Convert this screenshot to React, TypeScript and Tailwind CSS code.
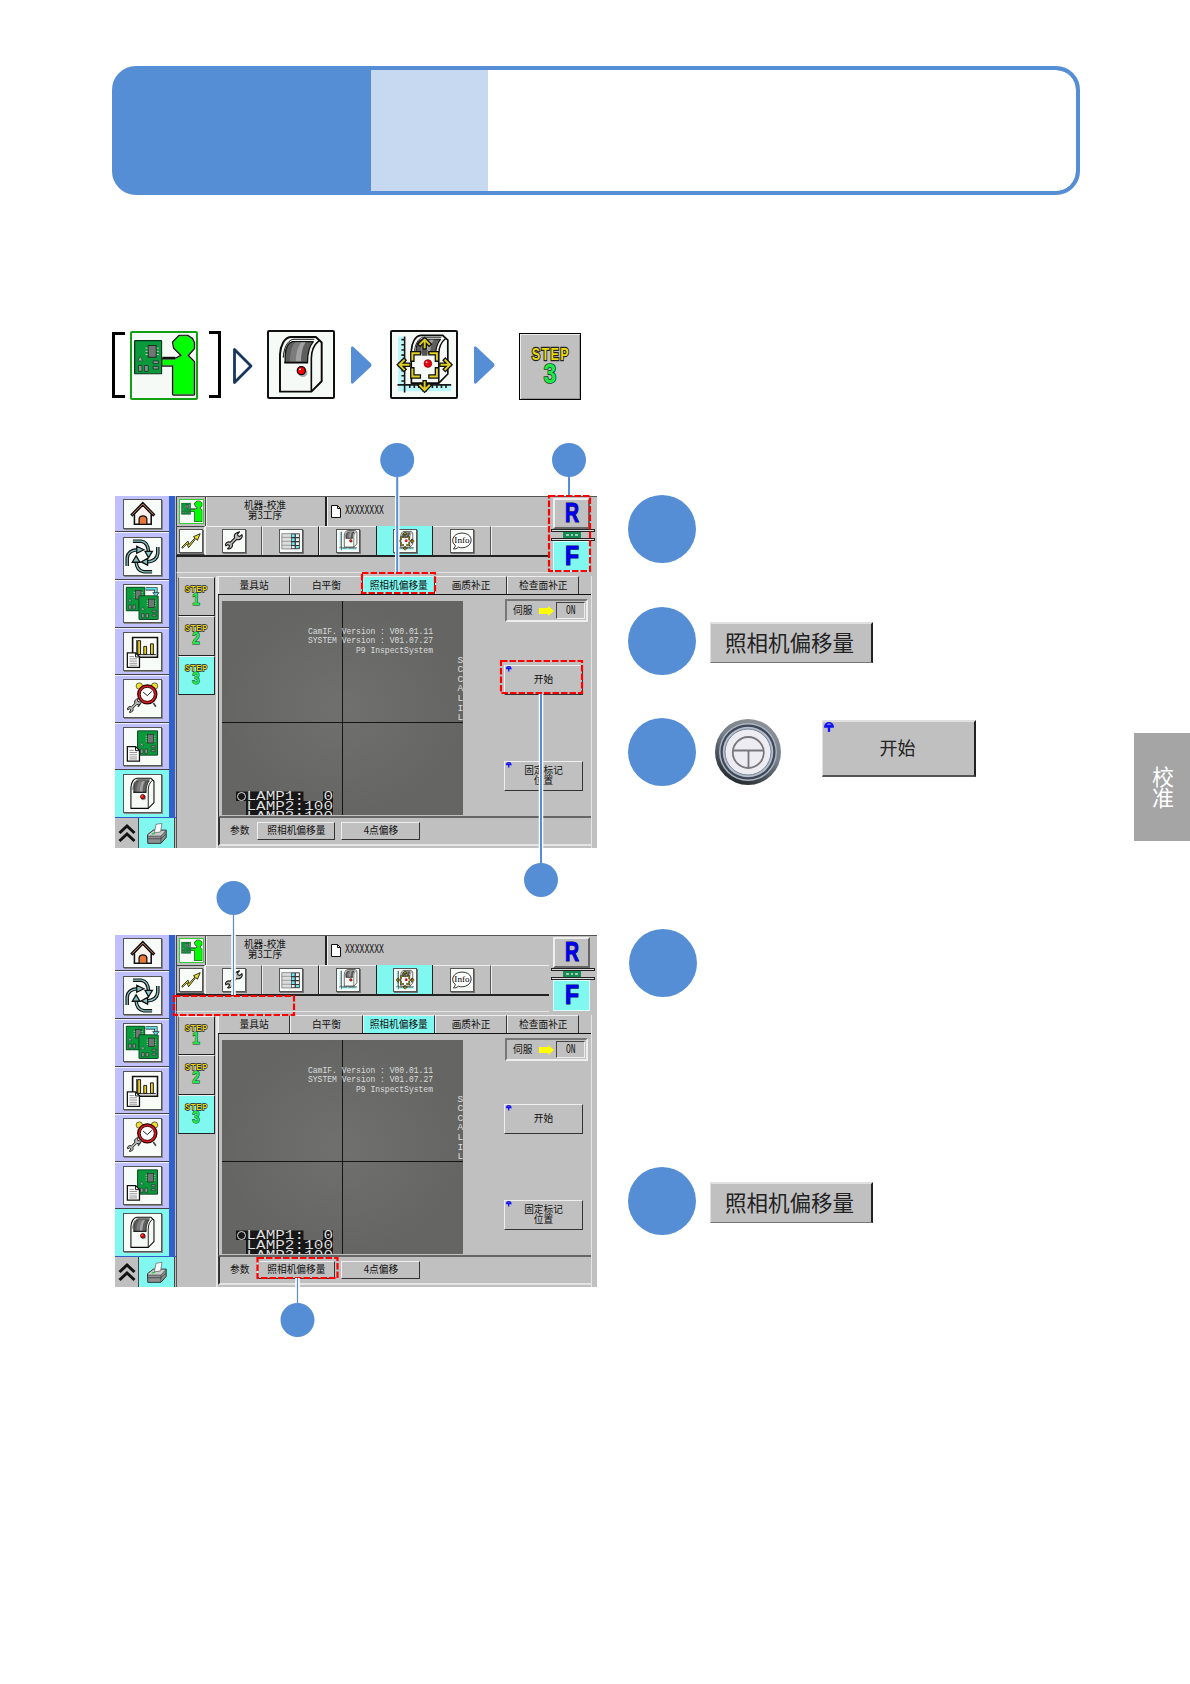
import type { ReactNode } from "react";

type StepNo = 1 | 2 | 3;

// ---------- shared drawings ----------

function Board({ x, y, w, h }: { x: number; y: number; w: number; h: number }) {
  return (
    <svg x={x} y={y} width={w} height={h} viewBox="0 0 64 76" preserveAspectRatio="none">
      <rect x="1.5" y="1.5" width="61" height="73" rx="2" fill="#0a9a3c" stroke="#08331a" strokeWidth="3" />
      <path d="M26 18h30M26 25h30M26 32h30" stroke="#c4dccb" strokeWidth="2" />
      <rect x="32" y="12" width="18" height="26" fill="#6f7772" stroke="#222" strokeWidth="2" />
      <path d="M8 46l6-10 6 10z" fill="#8fb09b" stroke="#143" strokeWidth="1.5" />
      <path d="M10 56h8v13h-8zM24 56h8v13h-8z" fill="#8d9490" stroke="#1b3a28" strokeWidth="2" />
      <path d="M43 46h12v6H43zM43 58h12v6H43z" fill="#8d9490" stroke="#1b3a28" strokeWidth="2" />
    </svg>
  );
}

function PaperShape({ x, y }: { x: number; y: number }) {
  return (
    <g transform={`translate(${x} ${y})`}>
      <path d="M1.5 1.5h26l12 12v33h-38z" fill="#fff" stroke="#111" strokeWidth="4" />
      <path d="M27 2v12h12" fill="none" stroke="#111" strokeWidth="3" />
      <path d="M8 13h14M8 20h24M8 27h24M8 34h24M8 40h24" stroke="#777" strokeWidth="2.5" />
    </g>
  );
}

function WrenchShape({ transform }: { transform?: string }) {
  return (
    <g transform={transform}>
      <path
        d="M44 10c-7 3-9 10-6 16L24 40c-7-3-14 1-16 8l2 4 6-4 5 3-1 6-5 4c7 3 15-2 16-10 0-3 0-4-1-5l15-15c8 3 16-1 18-10l-1-6-7 6-6-2-1-6 6-7z"
        fill="#b8b8b8"
        stroke="#111"
        strokeWidth="3.5"
        strokeLinejoin="round"
      />
    </g>
  );
}

function MachineShape() {
  return (
    <g strokeLinejoin="round">
      <path d="M37 187V72C38 45 50 20 70 18h78l18 17v120l-32 32z" fill="#f6faf6" stroke="#0a0a0a" strokeWidth="6" />
      <path d="M134 187V84c0-24 8-42 24-55" fill="none" stroke="#0a0a0a" strokeWidth="5" />
      <path d="M47 82c2-30 12-52 30-57h66" fill="none" stroke="#0a0a0a" strokeWidth="3" />
      <path d="M53 97V75c1-23 9-40 23-43h64c-12 14-18 34-18 65z" fill="#5e5e5e" stroke="#111" strokeWidth="4" />
      <path d="M68 94c0-26 5-46 16-60h16c-10 16-14 36-14 60z" fill="#7c7c7c" />
      <path d="M86 94c0-26 5-46 16-60h14c-10 16-14 36-14 60z" fill="#a2a2a2" />
      <path d="M50 97h74" stroke="#0a0a0a" strokeWidth="5" />
      <circle cx="108" cy="128" r="14" fill="#aaa" />
      <circle cx="103" cy="122" r="12.5" fill="#f00" stroke="#0a0a0a" strokeWidth="4" />
      <circle cx="99" cy="118" r="3" fill="#fff" />
    </g>
  );
}

function Axes() {
  return (
    <>
      <path d="M22 16h16v148h148v22H22z" fill="#b9f7fb" />
      <path d="M42 16v174M20 166h166" stroke="#1a1a1a" strokeWidth="5" />
      <path
        d="M32 26h10M32 42h10M32 58h10M32 74h10M32 90h10M32 106h10M32 122h10M32 138h10M32 154h10M58 166v10M72 166v10M86 166v10M114 166v10M128 166v10M142 166v10M156 166v10M170 166v10"
        stroke="#1a1a1a"
        strokeWidth="5"
      />
    </>
  );
}

function OffsetShape() {
  return (
    <>
      <Axes />
      <svg x="40" y="4" width="156" height="166" viewBox="20 8 160 190">
        <MachineShape />
      </svg>
      <rect x="66" y="70" width="78" height="72" fill="#f6faf6" />
      <rect x="95" y="58" width="18" height="18" fill="#555" />
      <g fill="none" strokeLinecap="square">
        {["#111", "#e0cf20"].map((color, i) => (
          <g key={color} stroke={color} strokeWidth={i ? 6 : 14}>
            <path d="M66 88V68h20M122 68h20v20M66 118v22h20M122 140h20v-22" />
            <path d="M104 50V28M90 40l14-14 14 14M104 158v22M90 168l14 14 14-14M54 104H28M40 90l-14 14 14 14M156 104h24M168 90l14 14-14 14" />
          </g>
        ))}
      </g>
      <circle cx="114" cy="100" r="12" fill="#e60012" stroke="#700" strokeWidth="2" />
      <circle cx="110" cy="96" r="3" fill="#fbb" />
    </>
  );
}

function PersonShape() {
  return (
    <>
      <path d="M97 76h40v10H97z" fill="#111" />
      <path
        d="M150 12h24l14 9 6 12v17l-20 22 20 20v100h-63V102H97V85h37l24-13-24-24-3-17z"
        fill="none"
        stroke="#111"
        strokeWidth="9"
        strokeLinejoin="round"
      />
      <path
        d="M150 12h24l14 9 6 12v17l-20 22 20 20v100h-63V102H97V85h37l24-13-24-24-3-17z"
        fill="#0f0"
        stroke="#7d9a7d"
        strokeWidth="2"
      />
      <Board x={9} y={24} w={88} h={107} />
    </>
  );
}

// ---------- icon boxes ----------

function BigIcon({ className, children }: { className: string; children: ReactNode }) {
  return (
    <svg viewBox="3 3 198 200" className={`h-[69px] w-[68px] rounded-xs border-2 bg-[#f6faf6] ${className}`}>
      {children}
    </svg>
  );
}

function SideIcon({ children, short }: { children: ReactNode; short?: boolean }) {
  return (
    <svg
      viewBox={short ? "0 0 116 90" : "0 0 116 116"}
      className={`w-[39px] border border-[#555] bg-[#f8fcf8] shadow-[1px_1px_0_#888] ${short ? "h-[30px]" : "h-[39px]"}`}
    >
      {children}
    </svg>
  );
}

function ToolIcon({ children }: { children: ReactNode }) {
  return (
    <svg viewBox="0 0 72 72" className="size-6 border border-[#555] bg-[#f8fcf8] shadow-[1px_1px_0_#777]">
      {children}
    </svg>
  );
}

function StepLabel({ n, className }: { n: StepNo; className: string }) {
  return (
    <svg viewBox="0 0 70 72" className={className}>
      <g fontFamily="Liberation Sans, sans-serif" fontWeight="bold" paintOrder="stroke">
        <text transform="scale(.76 1)" x="4" y="25" fontSize="29" fill="#e8d80c" stroke="#222" strokeWidth="4" textLength="85">
          STEP
        </text>
        <text x="24" y="65" fontSize="47" fill="#1fe84a" stroke="#0b4a1c" strokeWidth="3" textLength="22" lengthAdjust="spacingAndGlyphs">
          {n}
        </text>
      </g>
    </svg>
  );
}

function HandleMark({ className }: { className: string }) {
  return (
    <svg viewBox="0 0 10 10" className={className}>
      <circle cx="5" cy="5" r="5" fill="#1212f0" />
      <path d="M0 5.8h3.800V10H0zM10 5.800H6.200V10H10z" fill="#c0c0c8" />
      <path d="M2.6 2.800a3.400 3.400 0 0 1 4.800 0z" fill="#a0a0f4" />
    </svg>
  );
}

// ---------- breadcrumb ----------

function NextArrow({ className }: { className: string }) {
  return (
    <svg viewBox="0 0 21 38" className={`h-[38px] w-[21px] ${className}`}>
      <path d="M0 1.5Q0 0 2 0.5L20 17.5Q21 19 20 20.5L2 37.5Q0 38 0 36.5z" fill="#558ed5" />
    </svg>
  );
}

function Breadcrumb() {
  return (
    <nav className="mt-[135px] ml-[112px] flex h-[70px] items-start">
      <span className="mt-[2px] h-[66px] w-[13px] border-y-3 border-l-3 border-black" />
      <BigIcon className="mt-[1px] ml-[5px] border-[#12a012]">
        <PersonShape />
      </BigIcon>
      <span className="mt-[1px] ml-[11px] h-[67px] w-3 border-y-3 border-r-3 border-black" />
      <svg viewBox="0 0 20 38" className="mt-[17px] ml-3 h-[38px] w-5">
        <path d="M1.5 2.5v33L18 19z" fill="#fff" stroke="#17365d" strokeWidth="2.8" strokeLinejoin="round" />
      </svg>
      <BigIcon className="ml-[14px] border-[#111]">
        <MachineShape />
      </BigIcon>
      <NextArrow className="mt-4 ml-4" />
      <BigIcon className="ml-[18px] border-[#111]">
        <OffsetShape />
      </BigIcon>
      <NextArrow className="mt-4 ml-4" />
      <div className="mt-[3px] ml-6 flex h-[67px] w-[62px] items-center justify-center border border-black bg-[#c0c0c0] shadow-[inset_1px_1px_0_#eee,inset_-1px_-1px_0_#999]">
        <StepLabel n={3} className="h-[41px] w-[40px]" />
      </div>
    </nav>
  );
}

// ---------- machine screen ----------

function HomeIcon() {
  return (
    <SideIcon short>
      <path d="M32 44v34h54V44L59 16z" fill="#fdf3ec" stroke="#111" strokeWidth="5" />
      <path d="M22 50l37-38 37 38" fill="none" stroke="#111" strokeWidth="10" />
      <path d="M25 47l34-34 34 34" fill="none" stroke="#e08a60" strokeWidth="3" />
      <path d="M47 78V60c3-12 22-12 25 0v18z" fill="#e87838" stroke="#111" strokeWidth="4" />
    </SideIcon>
  );
}

function CycleIcon() {
  return (
    <SideIcon>
      {["#111", "#86c4c6"].map((color, i) => (
        <g key={color} fill="none" stroke={color} strokeWidth={i ? 4 : 11}>
          <path d="M28 10h26c16 2 22 14 23 34" />
          <path d="M106 28v20c-2 18-14 26-34 27" />
          <path d="M88 106H62c-17-3-23-14-24-32" />
          <path d="M10 88V62c2-17 14-24 32-25" />
        </g>
      ))}
      <path d="M66 42l11 20 12-20zM74 64L54 75l20 10zM26 76l12-20 12 20zM40 26l22 11-22 11z" fill="#86c4c6" stroke="#111" strokeWidth="4" />
    </SideIcon>
  );
}

function BoardsIcon() {
  return (
    <SideIcon>
      <Board x={5} y={5} w={62} h={78} />
      <Board x={45} y={32} w={64} h={78} />
      <path d="M68 12h32v14" fill="none" stroke="#111" strokeWidth="10" />
      <path d="M68 12h32v14" fill="none" stroke="#5fe0e8" strokeWidth="6" />
      <path d="M90 24h20l-10 12z" fill="#5fe0e8" stroke="#111" strokeWidth="2" />
    </SideIcon>
  );
}

function ChartIcon() {
  return (
    <SideIcon>
      <path d="M27 14h78v62H27z" fill="#fff" stroke="#111" strokeWidth="5" />
      <path d="M40 22v46h60" fill="none" stroke="#111" strokeWidth="3" />
      <path d="M43 24h9v43h-9zM62 42h9v25h-9zM83 34h9v33h-9z" fill="#e8d020" stroke="#111" strokeWidth="3" />
      <PaperShape x={9} y={61} />
    </SideIcon>
  );
}

function ClockIcon() {
  return (
    <SideIcon>
      <path d="M52 72l-8 12M92 72l8 12" stroke="#444" strokeWidth="5" />
      <circle cx="48" cy="19" r="10" fill="#f0e030" stroke="#222" strokeWidth="2" />
      <circle cx="96" cy="19" r="10" fill="#f0e030" stroke="#222" strokeWidth="2" />
      <circle cx="73" cy="45" r="30" fill="#d81c1c" stroke="#300" strokeWidth="4" />
      <circle cx="73" cy="45" r="22" fill="#fff" stroke="#300" strokeWidth="3" />
      <path d="M60 38l13 11 14-13" fill="none" stroke="#111" strokeWidth="3" />
      <WrenchShape transform="translate(4 52) scale(.8)" />
    </SideIcon>
  );
}

function BoardDocIcon() {
  return (
    <SideIcon>
      <Board x={41} y={7} w={66} h={80} />
      <PaperShape x={9} y={57} />
    </SideIcon>
  );
}

function MachineIcon() {
  return (
    <SideIcon>
      <g transform="translate(1 0) scale(.56)">
        <MachineShape />
      </g>
    </SideIcon>
  );
}

const sideItems = [CycleIcon, BoardsIcon, ChartIcon, ClockIcon, BoardDocIcon];

function Sidebar() {
  return (
    <aside className="w-[61px] shrink-0">
      <div className="flex h-[322px] border-b border-[#2f5fc8]">
        <div className="flex w-[54px] flex-col">
          <div className="flex h-[36.5px] items-center justify-center border-b border-[#444] bg-[#c0c0ff]">
            <HomeIcon />
          </div>
          {sideItems.map((Icon, i) => (
            <div
              key={i}
              className="flex h-[47.6px] items-center justify-center border-t border-b border-t-[#eef] border-b-[#444] bg-[#c0c0ff]"
            >
              <Icon />
            </div>
          ))}
          <div className="flex h-[47px] items-center justify-center bg-[#80f8f0]">
            <MachineIcon />
          </div>
        </div>
        <div className="w-[6px] bg-[#2f60cc]" />
      </div>
      <div className="flex h-[30px]">
        <div className="flex w-6 items-center justify-center border-r border-[#444] bg-[#c0c0c0]">
          <svg viewBox="0 0 18 20" className="h-5 w-[18px]">
            <path d="M1.5 10L9 3l7.500 7M1.500 18L9 11l7.500 7" fill="none" stroke="#111" strokeWidth="3" />
          </svg>
        </div>
        <div className="flex w-9 items-center justify-center border-r border-[#444] bg-[#80f8f0]">
          <svg viewBox="0 0 60 64" className="h-[21px] w-5">
            <path d="M1 36l18-14h39v22L42 62H2z" fill="#8c9090" stroke="#333" strokeWidth="3" />
            <path d="M1 36l18-14h39L42 40H2z" fill="#c8cccc" stroke="#333" strokeWidth="2" />
            <path d="M22 30L27 4l18-3-4 26z" fill="#fff" stroke="#555" strokeWidth="2" />
            <path d="M42 40v21M2 48h40l15-14" fill="none" stroke="#333" strokeWidth="2" />
            <path d="M14 34l10-3" stroke="#2c4" strokeWidth="4" />
          </svg>
        </div>
      </div>
    </aside>
  );
}

function ToolBar() {
  return (
    <div className="flex h-[31px] border-b-2 border-[#222]">
      <div className="flex w-[29px] items-center justify-center border border-[#444] border-r-[#eee]">
        <ToolIcon>
          <path d="M6 56l20-20 3 12 20-22-5-4 22-10-9 22-5-6-24 30-5-13L8 60z" fill="#f0e020" stroke="#222" strokeWidth="3" />
        </ToolIcon>
      </div>
      <div className="flex w-[57px] items-center justify-center border-t border-l border-r border-t-[#eee] border-l-[#eee] border-r-[#555]">
        <ToolIcon>
          <WrenchShape />
        </ToolIcon>
      </div>
      <div className="flex w-[57px] items-center justify-center border-t border-l border-r border-t-[#eee] border-l-[#eee] border-r-[#222]">
        <ToolIcon>
          <path d="M6 12h58v50H6z" fill="#ddd" stroke="#555" strokeWidth="2" />
          <path d="M36 12h28v50H36z" fill="#333" />
          <path d="M38 14h10v9H38zM38 27h10v9H38zM38 40h10v9H38zM52 52h10v8H52z" fill="#6fe4ec" />
          <path d="M52 14h10v9H52zM52 27h10v9H52zM52 40h10v9H52zM38 52h10v8H38z" fill="#eee" />
          <path d="M6 24h30M6 37h30M6 50h30" stroke="#777" strokeWidth="2" />
        </ToolIcon>
      </div>
      <div className="flex w-[57px] items-center justify-center border-t border-l border-t-[#eee] border-l-[#eee]">
        <ToolIcon>
          <g transform="scale(.35)">
            <Axes />
          </g>
          <g transform="translate(12 -4) scale(.32)">
            <MachineShape />
          </g>
        </ToolIcon>
      </div>
      <div className="flex w-[57px] items-center justify-center border-x border-[#222] bg-[#80f8f0]">
        <ToolIcon>
          <g transform="scale(.35)">
            <OffsetShape />
          </g>
        </ToolIcon>
      </div>
      <div className="flex w-[58px] items-center justify-center border-t border-r border-t-[#eee] border-r-[#555]">
        <ToolIcon>
          <path d="M14 50C-2 40 4 10 36 10s38 28 20 42c-10 7-24 8-32 4-6 6-10 6-16 6 4-4 6-8 6-12z" fill="#fff" stroke="#222" strokeWidth="3" />
          <text
            x="11"
            y="43"
            fontSize="29"
            fontFamily="Liberation Serif, serif"
            textLength="50"
            lengthAdjust="spacingAndGlyphs"
            fill="#000"
          >
            Info
          </text>
        </ToolIcon>
      </div>
      <div className="flex-1 border-t border-l border-[#eee]" />
    </div>
  );
}

function TrackLetter({ letter }: { letter: string }) {
  return (
    <svg viewBox="0 0 20 26" className="h-[26px] w-5 -translate-y-px">
      <text
        x="3"
        y="21.800"
        fontFamily="Liberation Sans, sans-serif"
        fontWeight="bold"
        fontSize="27"
        fill="#0000f0"
        stroke="#101060"
        strokeWidth="1.2"
        paintOrder="stroke"
        textLength="14"
        lengthAdjust="spacingAndGlyphs"
      >
        {letter}
      </text>
    </svg>
  );
}

function TrackSwitch() {
  return (
    <div className="flex h-[77px] w-[47px] flex-col border-t border-[#555] pt-[1px] pl-1">
      <div className="flex h-[31px] w-[37px] items-center justify-center border-2 border-t-[#eee] border-r-[#666] border-b-[#666] border-l-[#eee]">
        <TrackLetter letter="R" />
      </div>
      <div className="-ml-[2px] flex h-3 w-11 flex-col justify-between">
        <div className="h-[3px] border border-[#222] bg-[#ddd]" />
        <svg viewBox="0 0 18 6" className="ml-3 h-[6px] w-[18px]">
          <path d="M0 0h18v6H0z" fill="#168a50" />
          <path d="M3 2h3v2H3zM8 2h2v2H8zM12 2h3v2h-3z" fill="#9cb" />
        </svg>
        <div className="h-[3px] border border-[#222] bg-[#ddd]" />
      </div>
      <div className="flex h-[31px] w-[37px] items-center justify-center border border-[#dff] bg-[#80f8f0]">
        <TrackLetter letter="F" />
      </div>
    </div>
  );
}

const lampRows = [
  { label: "LAMP1:", value: "0", y: 199.3 },
  { label: "LAMP2:", value: "100", y: 209 },
  { label: "LAMP3:", value: "100", y: 218.6 },
];

function CameraView() {
  return (
    <svg viewBox="0 0 241 214" className="mt-[6px] ml-[3px] block h-[214px] w-[241px] bg-[#696a68]">
      <defs>
        <radialGradient id="glow">
          <stop offset="0" stopColor="#70716f" />
          <stop offset="1" stopColor="#656664" />
        </radialGradient>
      </defs>
      <rect width="241" height="214" fill="url(#glow)" />
      <path d="M120.500 0V214M0 121.500H241" stroke="#151515" />
      <g fontFamily="Liberation Mono, monospace" fontSize="9.600" fill="#dcdcdc">
        <text x="86" y="32.500" textLength="125" lengthAdjust="spacingAndGlyphs">
          CamIF. Version : V00.01.11
        </text>
        <text x="86" y="42" textLength="125" lengthAdjust="spacingAndGlyphs">
          SYSTEM Version : V01.07.27
        </text>
        <text x="134" y="51.500" textLength="77" lengthAdjust="spacingAndGlyphs">
          P9 InspectSystem
        </text>
        {"SCCALIL".split("").map((c, i) => (
          <text key={i} x="235.5" y={61.500 + i * 9.600} fontSize="9.500">
            {c}
          </text>
        ))}
      </g>
      <path d="M14 190.500h67.500v9.500H101v-9.500h10V218H24v-18H14z" fill="#171717" />
      <g fontFamily="Liberation Mono, monospace" fontSize="12" fill="#ddd">
        <circle cx="19.500" cy="195.500" r="4" fill="none" stroke="#ddd" />
        {lampRows.map((row) => (
          <g key={row.label}>
            <text x="24.500" y={row.y} textLength="57.500" lengthAdjust="spacingAndGlyphs">
              {row.label}
            </text>
            <text
              x={111 - row.value.length * 9.6}
              y={row.y}
              textLength={row.value.length * 9.6}
              lengthAdjust="spacingAndGlyphs"
            >
              {row.value}
            </text>
          </g>
        ))}
      </g>
    </svg>
  );
}

function PanelButton({ className, children, mark }: { className: string; children: ReactNode; mark?: boolean }) {
  return (
    <button
      className={`relative flex items-center justify-center border border-t-[#eee] border-r-[#333] border-b-[#333] border-l-[#eee] bg-[#c0c0c0] text-center ${className}`}
    >
      {mark && <HandleMark className="absolute top-0 left-[1px] size-[5.500px]" />}
      {children}
    </button>
  );
}

const tabs = ["量具站", "白平衡", "照相机偏移量", "画质补正", "检查面补正"];

function Screen({ children }: { children: ReactNode }) {
  return (
    <figure className="relative flex h-[352px] w-[482px] bg-[#c0c0c0] font-['Noto_Sans_CJK_SC',sans-serif] text-[9.700px] leading-[9.600px] text-[#111]">
      <Sidebar />
      <div className="w-[421px] border-t border-[#555]">
        <div className="-mt-px flex h-[77px]">
          <div className="w-[373px]">
            <div className="flex h-[30px] border-t border-[#555]">
              <div className="flex w-[30px] items-center justify-center border-x border-[#444]">
                <svg viewBox="0 0 204 206" className="size-[25px] border border-[#3c3] bg-[#f6faf6]">
                  <PersonShape />
                </svg>
              </div>
              <div className="flex w-[121px] flex-col items-center justify-center border-r-2 border-l border-r-[#222] border-l-[#eee] pr-[2px] pb-[2px]">
                <span>机器-校准</span>
                <span>第3工序</span>
              </div>
              <div className="flex flex-1 items-center border-l border-[#eee] pb-px pl-[3px]">
                <svg viewBox="0 0 10 13" className="h-[13px] w-[10px]">
                  <path d="M.5.5h6l3 3v9h-9z" fill="#fff" stroke="#111" />
                  <path d="M6.500.5v3h3" fill="none" stroke="#111" />
                </svg>
                <span className="ml-1 inline-block scale-y-150 font-['Liberation_Mono',monospace] text-[8.100px]">XXXXXXXX</span>
              </div>
            </div>
            <ToolBar />
            <div className="h-4 border-b border-l border-b-[#e4e4e4] border-l-[#444]" />
          </div>
          <TrackSwitch />
        </div>

        <div className="flex h-[275px] border-l border-[#555] pt-[3px]">
          <div className="w-[41px] border-r-2 border-[#e4e4e4] pt-[1px] pl-[0.500px]">
            {([1, 2, 3] as StepNo[]).map((n) => (
              <div
                key={n}
                className={`flex h-[39.300px] w-[37px] items-start justify-center border border-t-[#eee] border-r-[#222] border-b-[#222] border-l-[#666] pt-[5px] ${
                  n === 3 ? "bg-[#80f8f0]" : ""
                }`}
              >
                <StepLabel n={n} className="h-[25px] w-[24px]" />
              </div>
            ))}
          </div>

          <div className="w-[374px] border-r border-[#e4e4e4]">
            <div className="flex h-[19px] border-b border-[#111]">
              {tabs.map((tab) => (
                <div
                  key={tab}
                  className={`flex w-[72.300px] items-center justify-center border-t border-r border-l border-t-[#eee] border-r-[#333] border-l-[#eee] ${
                    tab === "照相机偏移量" ? "bg-[#80f8f0]" : ""
                  }`}
                >
                  {tab}
                </div>
              ))}
            </div>
            <div className="flex h-[221px] border-l border-[#333]">
              <CameraView />
              <div className="flex w-[128px] flex-col items-end pr-2">
                <div className="mt-1 -mr-[5px] flex h-[23px] w-[83px] items-center border-2 border-t-[#777] border-r-[#eee] border-b-[#eee] border-l-[#777] pl-[6px]">
                  <span>伺服</span>
                  <svg viewBox="0 0 15 10" className="ml-[7px] h-[10px] w-[15px]">
                    <path d="M0 2h9V0l6 5-6 5V8H0z" fill="#ff0" />
                  </svg>
                  <div className="ml-[2px] flex h-[17px] w-[29px] items-center justify-center border border-t-[#444] border-r-[#eee] border-b-[#eee] border-l-[#444]">
                    <span className="inline-block scale-y-150 font-['Liberation_Mono',monospace] text-[8px]">ON</span>
                  </div>
                </div>
                <PanelButton mark className="mt-[43px] h-[30px] w-[79px]">
                  开始
                </PanelButton>
                <PanelButton mark className="mt-[66px] h-[30px] w-[79px]">
                  固定标记
                  <br />
                  位置
                </PanelButton>
              </div>
            </div>
            <div className="flex h-[30px] items-center border-t-2 border-b-2 border-l-2 border-t-[#666] border-b-[#e4e4e4] border-l-[#333] pb-[1px] pl-[10px]">
              <span>参数</span>
              <PanelButton className="ml-[8px] h-[18px] w-[78px]">照相机偏移量</PanelButton>
              <PanelButton className="ml-[6px] h-[18px] w-[79px]">4点偏移</PanelButton>
            </div>
          </div>
        </div>
      </div>
      {children}
    </figure>
  );
}

// Callouts are placed in the screen's own pixel space and may overflow it
type Callout = {
  circle: [number, number];
  line: [number, number];
  box: [number, number, number, number];
  thin?: boolean;
};

function Callouts({ items }: { items: Callout[] }) {
  return (
    <svg viewBox="0 0 482 352" className="absolute inset-0 h-[352px] w-[482px] overflow-visible">
      {items.map(({ circle: [cx, cy], line: [y1, y2], box: [x, y, w, h], thin }) => (
        <g key={`${cx}-${cy}`}>
          <rect x={x} y={y} width={w} height={h} fill="none" stroke="#f00" strokeWidth="2.200" strokeDasharray="6.500 2" />
          <path d={`M${cx} ${y1}V${y2}`} stroke="#fff" strokeWidth="4.500" />
          <path d={`M${cx} ${y1}V${y2}`} stroke="#558ed5" strokeWidth={thin ? 1.200 : 2} />
          <circle cx={cx} cy={cy} r="17" fill="#558ed5" />
        </g>
      ))}
    </svg>
  );
}

const firstCallouts: Callout[] = [
  { circle: [282.2, -36], line: [-20, 76], box: [247, 77, 73, 20] },
  { circle: [454, -36], line: [-20, -1], box: [434, 0, 41, 75] },
  { circle: [426, 384], line: [198, 368], box: [386, 165, 81, 32] },
];

const secondCallouts: Callout[] = [
  { circle: [118.5, -37], line: [-21, 60], box: [59, 61, 120, 19], thin: true },
  { circle: [182.5, 385], line: [343, 370], box: [142.500, 323, 80, 20], thin: true },
];

// ---------- instructions ----------

function Bullet() {
  return <span className="size-[68px] shrink-0 rounded-full bg-[#558ed5]" />;
}

function OffsetButton() {
  return (
    <button className="ml-[14px] flex h-[41px] w-[163px] items-center justify-center border-t-2 border-r-2 border-b border-l border-t-[#e0e0e0] border-r-[#222] border-b-[#777] border-l-[#e0e0e0] bg-[#c0c0c0] pr-[3px] pb-[3px] font-['Noto_Sans_CJK_SC',sans-serif] text-[21.500px] leading-none text-[#222]">
      照相机偏移量
    </button>
  );
}

function HandleButton() {
  return (
    <svg viewBox="0 0 66 66" className="mt-[1px] ml-[19px] size-[66px]">
      <defs>
        <linearGradient id="rim" x1=".8" y1="0" x2=".3" y2="1">
          <stop offset="0" stopColor="#8f9498" />
          <stop offset=".45" stopColor="#76808a" />
          <stop offset="1" stopColor="#20262a" />
        </linearGradient>
      </defs>
      <circle cx="33" cy="33" r="33" fill="url(#rim)" />
      <circle cx="33" cy="33" r="29" fill="#aab4c2" />
      <circle cx="33" cy="33" r="27.500" fill="#3f4655" />
      <circle cx="33" cy="33" r="25.300" fill="#b4bfce" />
      <circle cx="33" cy="33" r="23" fill="#ececf2" stroke="#7b8494" strokeWidth="1" />
      <g fill="none" stroke="#77777c" strokeWidth="1.800">
        <circle cx="33.300" cy="33.500" r="15.500" />
        <path d="M18 31.500h31M33.500 31.500V49" />
      </g>
    </svg>
  );
}

function Instructions() {
  return (
    <section className="ml-[31px] w-[400px]">
      <div className="-mt-px flex h-[112px]">
        <Bullet />
      </div>
      <div className="flex h-[111px]">
        <Bullet />
        <div className="pt-[15px]">
          <OffsetButton />
        </div>
      </div>
      <div className="flex h-[211px]">
        <Bullet />
        <HandleButton />
        <button className="relative mt-[2px] ml-[41px] flex h-[57px] w-[154px] items-center justify-center border-t-2 border-r-2 border-b-2 border-l border-t-[#e0e0e0] border-r-[#222] border-b-[#555] border-l-[#e0e0e0] bg-[#c0c0c0] pr-[2px] pb-1 font-['Noto_Sans_CJK_SC',sans-serif] text-[18px] leading-none text-[#222]">
          <HandleMark className="absolute top-0 left-[1px] size-[10px]" />
          开始
        </button>
      </div>
      <div className="flex h-[238px] pl-[0.500px]">
        <Bullet />
      </div>
      <div className="flex">
        <Bullet />
        <div className="pt-[15px]">
          <OffsetButton />
        </div>
      </div>
    </section>
  );
}

export default function App() {
  return (
    <div className="flex h-[1684px] w-[1190px] flex-col overflow-hidden bg-white">
      <header className="mt-[66px] ml-[112px] flex h-[129px] w-[968px] shrink-0 overflow-hidden rounded-[24px] border-4 border-[#558ed5] bg-[#558ed5]">
        <div className="w-[255px]" />
        <div className="w-[117px] bg-[#c6d9f1]" />
        <div className="flex-1 rounded-r-[20px] bg-white" />
      </header>

      <Breadcrumb />

      <main className="mt-24 ml-[115px] flex">
        <div className="flex flex-col gap-[87px]">
          <Screen>
            <Callouts items={firstCallouts} />
          </Screen>
          <Screen>
            <Callouts items={secondCallouts} />
          </Screen>
        </div>
        <Instructions />
        <div className="mt-[237px] ml-auto flex h-[108px] w-14 flex-col items-center justify-center bg-[#a5a5a5] pb-[2px] pl-[2px] font-['Noto_Sans_CJK_SC',sans-serif] text-[22px] leading-[21px] text-white">
          <span>校</span>
          <span>准</span>
        </div>
      </main>
    </div>
  );
}
